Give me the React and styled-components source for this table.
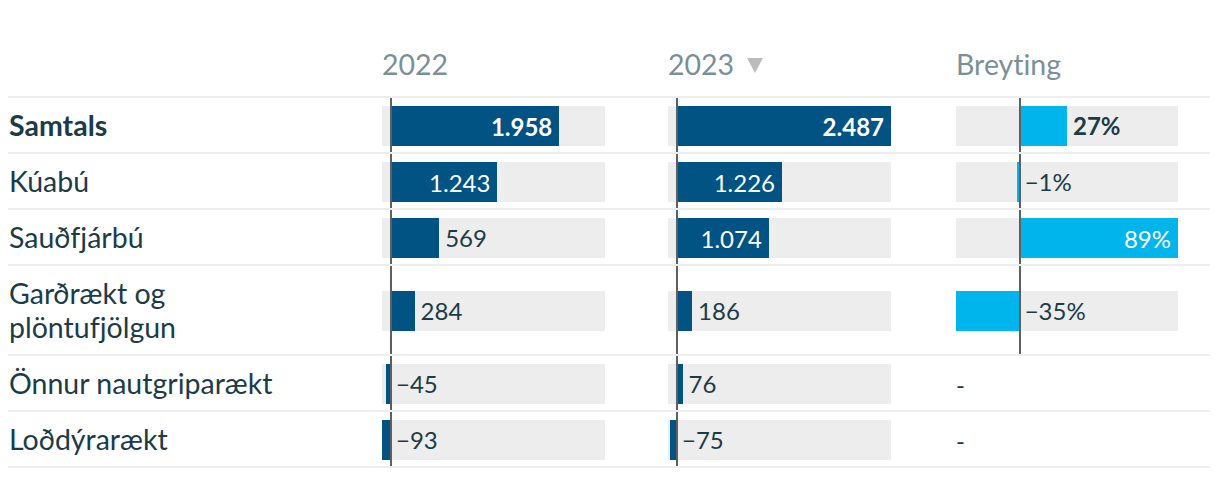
import React from "react";
import styled, { createGlobalStyle } from "styled-components";

const GlobalStyle = createGlobalStyle`
  body {
    margin: 8px;
    background: #fff;
    font-family: Lato, "Open Sans", sans-serif;
    font-variant-ligatures: none;
    color: #1b3c47;
  }
`;

const rows = [
  { label: "Samtals", bold: true, y22: 1958, y23: 2487, change: 27 },
  { label: "Kúabú", y22: 1243, y23: 1226, change: -1 },
  { label: "Sauðfjárbú", y22: 569, y23: 1074, change: 89 },
  { label: "Garðrækt og plöntufjölgun", y22: 284, y23: 186, change: -35 },
  { label: "Önnur nautgriparækt", y22: -45, y23: 76, change: null },
  { label: "Loðdýrarækt", y22: -93, y23: -75, change: null },
];

const TRACK = 223;
const yearDomain = [-93, 2487];
const changeDomain = [-35, 89];

const fmtNumber = (n) => {
  const s = Math.abs(n)
    .toString()
    .replace(/\B(?=(\d{3})+(?!\d))/g, ".");
  return n < 0 ? "\u2212" + s : s;
};
const fmtPct = (n) => (n < 0 ? "\u2212" : "") + Math.abs(n) + "%";

function BarCell({ value, domain, color, format, bold, width = TRACK }) {
  const [min, max] = domain;
  const scale = width / (max - min);
  const zeroX = -min * scale;
  const barW = Math.abs(value) * scale;
  const inside = value > 0 && barW > 80;
  const offset = value < 0 ? zeroX - barW : zeroX;

  return (
    <Cell>
      <Track style={{ width }}>
        <Spacer style={{ width: offset }} />
        <Bar $color={color} style={{ width: barW }}>
          {inside && (
            <Value $bold={bold} $inside>
              {format(value)}
            </Value>
          )}
        </Bar>
        {!inside && <Value $bold={bold}>{format(value)}</Value>}
        <Axis style={{ left: zeroX }} />
      </Track>
    </Cell>
  );
}

function Arrow() {
  return (
    <svg width="16" height="15" viewBox="0 0 16 15">
      <polygon points="0,0 16,0 8,15" fill="#bbbbbb" />
    </svg>
  );
}

export default function App() {
  return (
    <>
      <GlobalStyle />
      <Table>
        <HeaderRow>
          <span />
          <HeadCell>2022</HeadCell>
          <HeadCell>
            2023 <Arrow />
          </HeadCell>
          <HeadCell>Breyting</HeadCell>
        </HeaderRow>
        {rows.map((r) => (
          <Row key={r.label}>
            <Label $bold={r.bold}>{r.label}</Label>
            <BarCell
              value={r.y22}
              domain={yearDomain}
              color="#005383"
              format={fmtNumber}
              bold={r.bold}
            />
            <BarCell
              value={r.y23}
              domain={yearDomain}
              color="#005383"
              format={fmtNumber}
              bold={r.bold}
            />
            {r.change === null ? (
              <Empty>-</Empty>
            ) : (
              <BarCell
                value={r.change}
                domain={changeDomain}
                color="#00b4ec"
                format={fmtPct}
                bold={r.bold}
                width={222}
              />
            )}
          </Row>
        ))}
      </Table>
    </>
  );
}

const Table = styled.div`
  width: 1202px;
`;

const Row = styled.div`
  display: grid;
  grid-template-columns: 374px 286px 288px 1fr;
  border-bottom: 2px solid #eeeeee;
`;

const HeaderRow = styled(Row)`
  padding: 39px 0 15px;
  align-items: center;
`;

const HeadCell = styled.div`
  display: flex;
  align-items: center;
  gap: 13px;
  font-size: 28.5px;
  line-height: 34px;
  color: #7b8f98;

  svg {
    margin-top: 3px;
  }
`;

const Label = styled.div`
  padding: 10px 60px 10px 1px;
  font-size: 28.5px;
  line-height: 34px;
  font-weight: ${(p) => (p.$bold ? 700 : 400)};
  color: #1b3c47;
`;

const Cell = styled.div`
  display: flex;
  align-items: center;
`;

const Track = styled.div`
  position: relative;
  align-self: stretch;
  display: flex;
  align-items: center;

  &::before {
    content: "";
    position: absolute;
    left: 0;
    right: 0;
    top: 50%;
    height: 40px;
    margin-top: -19px;
    background: #ededed;
  }
`;

const Spacer = styled.div`
  flex: none;
`;

const Bar = styled.div`
  position: relative;
  flex: none;
  height: 40px;
  margin-top: 2px;
  display: flex;
  align-items: center;
  justify-content: flex-end;
  background: ${(p) => p.$color};
`;

const Value = styled.span`
  position: relative;
  flex: none;
  font-size: 24px;
  line-height: 1;
  margin-top: 2px;
  font-weight: ${(p) => (p.$bold ? 700 : 400)};
  color: ${(p) => (p.$inside ? "#ffffff" : "#1b3c47")};
  padding: ${(p) => (p.$inside ? "0 7px 0 0" : "0 0 0 4px")};
  margin-left: ${(p) => (p.$inside ? "0" : "2px")};
`;

const Axis = styled.div`
  position: absolute;
  top: 0;
  bottom: 0;
  width: 2px;
  background: #5f5f5f;
`;

const Empty = styled.div`
  display: flex;
  align-items: center;
  padding-top: 2px;
  font-size: 24px;
  color: #1b3c47;
`;
